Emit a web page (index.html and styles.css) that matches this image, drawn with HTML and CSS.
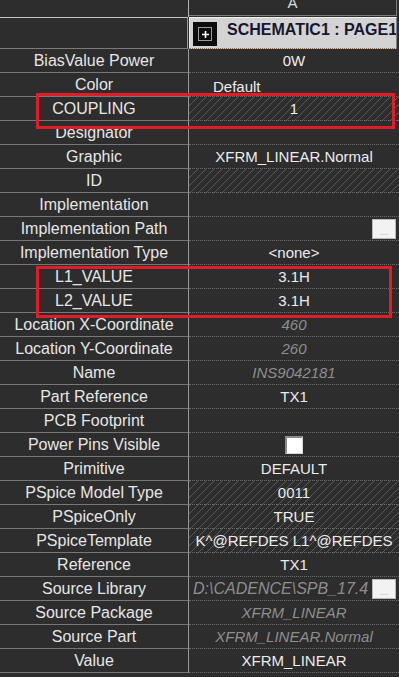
FILE: index.html
```html
<!DOCTYPE html>
<html lang="en">

<head>
    <meta charset="UTF-8">
    <meta name="viewport" content="width=device-width, initial-scale=1.0">
    <title>Part Properties</title>
    <link rel="stylesheet" href="styles.css">
</head>

<body>

    <div class="grid">
        <div class="top">
            <div class="corner"></div>
            <div class="col-a"><span>A</span></div>
        </div>

        <div class="head">
            <div class="head-blank"></div>
            <div class="head-part">
                <span class="expand">
                    <span class="plus-box">
                        <svg width="9" height="9" viewBox="0 0 9 9">
                            <path d="M4.5 1v7M1 4.5h7" stroke="#fff" stroke-width="1.6" fill="none" />
                        </svg>
                    </span>
                </span>
                <span class="head-title">SCHEMATIC1 : PAGE1</span>
            </div>
        </div>

        <div class="row"><div class="name">BiasValue Power</div><div class="val">0W</div></div>
        <div class="row"><div class="name">Color</div><div class="val val-drop">Default</div></div>
        <div class="row"><div class="name">COUPLING</div><div class="val ro">1</div></div>
        <div class="row"><div class="name">Designator</div><div class="val"></div></div>
        <div class="row"><div class="name">Graphic</div><div class="val">XFRM_LINEAR.Normal</div></div>
        <div class="row"><div class="name">ID</div><div class="val ro"></div></div>
        <div class="row"><div class="name">Implementation</div><div class="val"></div></div>
        <div class="row">
            <div class="name">Implementation Path</div>
            <div class="val val-btn"><span class="dots-btn">...</span></div>
        </div>
        <div class="row"><div class="name">Implementation Type</div><div class="val">&lt;none&gt;</div></div>
        <div class="row"><div class="name">L1_VALUE</div><div class="val">3.1H</div></div>
        <div class="row"><div class="name">L2_VALUE</div><div class="val">3.1H</div></div>
        <div class="row"><div class="name">Location X-Coordinate</div><div class="val dim">460</div></div>
        <div class="row"><div class="name">Location Y-Coordinate</div><div class="val dim">260</div></div>
        <div class="row"><div class="name">Name</div><div class="val dim">INS9042181</div></div>
        <div class="row"><div class="name">Part Reference</div><div class="val">TX1</div></div>
        <div class="row"><div class="name">PCB Footprint</div><div class="val"></div></div>
        <div class="row">
            <div class="name">Power Pins Visible</div>
            <div class="val val-check"><span class="check"></span></div>
        </div>
        <div class="row"><div class="name">Primitive</div><div class="val">DEFAULT</div></div>
        <div class="row"><div class="name">PSpice Model Type</div><div class="val ro">0011</div></div>
        <div class="row"><div class="name">PSpiceOnly</div><div class="val ro">TRUE</div></div>
        <div class="row"><div class="name">PSpiceTemplate</div><div class="val ro">K^@REFDES L1^@REFDES</div></div>
        <div class="row"><div class="name">Reference</div><div class="val">TX1</div></div>
        <div class="row">
            <div class="name">Source Library</div>
            <div class="val val-btn">
                <span class="path dim">D:\CADENCE\SPB_17.4</span>
                <span class="dots-btn">...</span>
            </div>
        </div>
        <div class="row"><div class="name">Source Package</div><div class="val dim">XFRM_LINEAR</div></div>
        <div class="row"><div class="name">Source Part</div><div class="val dim">XFRM_LINEAR.Normal</div></div>
        <div class="row"><div class="name">Value</div><div class="val">XFRM_LINEAR</div></div>

        <!-- red highlight boxes drawn over the grid -->
        <div class="mark mark-coupling"></div>
        <div class="mark mark-values"></div>
    </div>

</body>

</html>
```

FILE: styles.css
```css
body {
    margin: 0;
    background-color: #2d2d2d;
    font-family: "Liberation Sans", Arial, sans-serif;
    color: #e8e8e8;
}

.grid {
    position: relative;
    width: 399px;
}

/* column header strip */
.top {
    display: flex;
    height: 17px;
}

.corner {
    width: 189px;
    box-sizing: border-box;
    border-right: 1px solid #b4b4b4;
}

.col-a {
    width: 208px;
    height: 16px;
    box-sizing: border-box;
    border-bottom: 1px solid #7c7c7c;
    border-right: 1px solid #7c7c7c;
    overflow: hidden;
    text-align: center;
    font-size: 15px;
    color: #dcdcdc;
}

.col-a span {
    display: block;
    line-height: 16px;
    margin-top: -5px;
}

/* part header */
.head {
    display: flex;
    height: 32px;
}

.head-blank {
    width: 188px;
    box-sizing: border-box;
    border-top: 1px solid #c2c2c2;
    border-right: 1px solid #9a9a9a;
    border-bottom: 1px solid #7a7a7a;
    margin-right: 1px;
}

.head-part {
    width: 208px;
    box-sizing: border-box;
    display: flex;
    align-items: center;
    background: #d3d3d3;
    border-top: 1px solid #f2f2f2;
    border-left: 1px solid #ebebeb;
    border-right: 1px solid #808080;
    border-bottom: 1px dotted #8a6a4a;
    overflow: hidden;
}

.expand {
    flex: none;
    width: 24px;
    height: 24px;
    margin: 2px 10px 0 3px;
    background: #0d0d0d;
    display: flex;
    align-items: center;
    justify-content: center;
}

.plus-box {
    width: 12px;
    height: 12px;
    border: 1px solid #9c9c9c;
    display: flex;
    align-items: center;
    justify-content: center;
}

.head-title {
    white-space: nowrap;
    font-size: 16px;
    font-weight: bold;
    color: #161630;
    margin-bottom: 6px;
}

/* property rows */
.row {
    display: flex;
    height: 24px;
}

.name {
    width: 189px;
    flex: none;
    box-sizing: border-box;
    border-right: 1px solid #979797;
    border-bottom: 1px solid #777;
    text-align: center;
    line-height: 23px;
    font-size: 16px;
    white-space: nowrap;
    color: #e6e6e6;
}

.val {
    flex: 1;
    box-sizing: border-box;
    border-bottom: 1px dotted #6c6c6c;
    text-align: center;
    line-height: 23px;
    font-size: 15px;
    white-space: nowrap;
    overflow: hidden;
    color: #ececec;
}

.val-drop {
    text-align: left;
    padding-left: 24px;
    line-height: 27px;
}

.ro {
    background: repeating-linear-gradient(135deg, #5a5a5a 0 1px, transparent 1px 5.66px);
}

.dim {
    font-style: italic;
    color: #8e8e8e;
}

.val-btn {
    display: flex;
    align-items: center;
    justify-content: flex-end;
    padding-right: 3px;
}

.path {
    flex: 1;
    text-align: left;
    padding-left: 4px;
    font-size: 16px;
    overflow: hidden;
}

.dots-btn {
    flex: none;
    width: 24px;
    height: 20px;
    box-sizing: border-box;
    background: #f2f2f2;
    border: 1px solid #b8b8b8;
    color: #b0b0b0;
    font-size: 10px;
    line-height: 24px;
    text-align: center;
    font-style: normal;
}

.val-check {
    display: flex;
    align-items: center;
    justify-content: center;
}

.check {
    width: 18px;
    height: 18px;
    box-sizing: border-box;
    background: #fff;
    border-top: 2px solid #8a8a8a;
    border-left: 2px solid #8a8a8a;
    border-right: 1px solid #d8d8d8;
    border-bottom: 1px solid #d8d8d8;
}

/* annotations */
.mark {
    position: absolute;
    box-sizing: border-box;
    border: 3px solid #e11d27;
}

.mark-coupling {
    left: 36px;
    top: 93px;
    width: 359px;
    height: 36px;
}

.mark-values {
    left: 36px;
    top: 266px;
    width: 356px;
    height: 52px;
}
```
